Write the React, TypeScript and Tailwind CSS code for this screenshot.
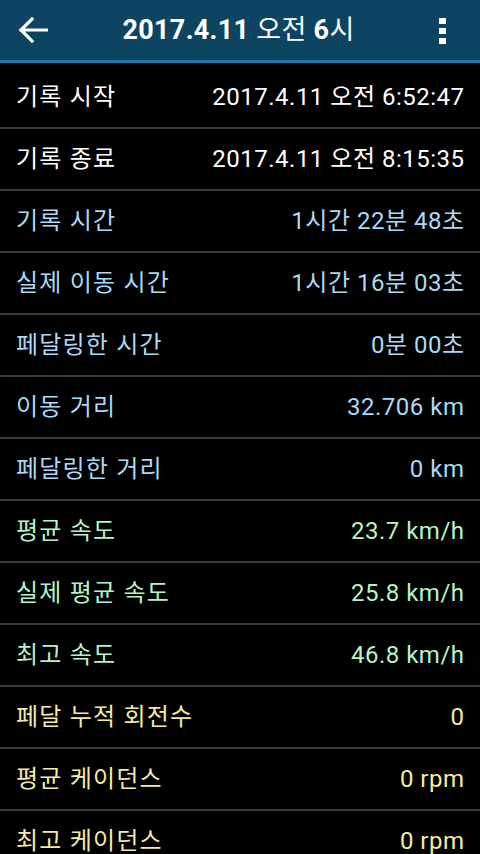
import React from "react";

const rows: { label: string; value: string; color: string }[] = [
  { label: "기록 시작", value: "2017.4.11 오전 6:52:47", color: "text-white" },
  { label: "기록 종료", value: "2017.4.11 오전 8:15:35", color: "text-white" },
  { label: "기록 시간", value: "1시간 22분 48초", color: "text-[#a9d9f5]" },
  { label: "실제 이동 시간", value: "1시간 16분 03초", color: "text-[#a9d9f5]" },
  { label: "페달링한 시간", value: "0분 00초", color: "text-[#a9d9f5]" },
  { label: "이동 거리", value: "32.706 km", color: "text-[#a9d9f5]" },
  { label: "페달링한 거리", value: "0 km", color: "text-[#a9d9f5]" },
  { label: "평균 속도", value: "23.7 km/h", color: "text-[#b5f5c5]" },
  { label: "실제 평균 속도", value: "25.8 km/h", color: "text-[#b5f5c5]" },
  { label: "최고 속도", value: "46.8 km/h", color: "text-[#b5f5c5]" },
  { label: "페달 누적 회전수", value: "0", color: "text-[#f5eba0]" },
  { label: "평균 케이던스", value: "0 rpm", color: "text-[#f5eba0]" },
  { label: "최고 케이던스", value: "0 rpm", color: "text-[#f5eba0]" },
];

export default function App() {
  return (
    <div
      className="w-[480px] h-[854px] overflow-hidden bg-black flex flex-col"
      style={{ fontFamily: 'Roboto, "Noto Sans CJK KR", sans-serif' }}
    >
      <div className="h-[60px] bg-[#0d4461] flex items-center shrink-0 pl-[18px] pr-[34px]">
        <svg width="30" height="26" viewBox="0 0 30 26" className="shrink-0">
          <path d="M29 13H3M14 2L3 13l11 11" stroke="white" strokeWidth="3.2" fill="none" strokeLinecap="square" />
        </svg>
        <div className="flex-1 text-center text-white text-[27px] leading-none font-bold tracking-[0.3px] pr-[10px]">
          2017.4.11 <span className="font-normal">오전</span> 6<span className="font-normal">시</span>
        </div>
        <div className="flex flex-col gap-[4px] pt-[2px]">
          <div className="w-[7px] h-[6px] bg-white" />
          <div className="w-[7px] h-[6px] bg-white" />
          <div className="w-[7px] h-[6px] bg-white" />
        </div>
      </div>
      <div className="h-[3px] bg-[#1f78ad] shrink-0" />
      <div className="pt-[4px] flex flex-col">
        {rows.map((r) => (
          <div
            key={r.label}
            className={`h-[62px] shrink-0 border-b-2 border-[#3a3a3a] flex items-center justify-between px-4 text-[24px] ${r.color}`}
          >
            <span className="tracking-[1.2px]">{r.label}</span>
            <span className="tracking-[0.5px] -mr-[0.5px]">{r.value}</span>
          </div>
        ))}
      </div>
    </div>
  );
}
